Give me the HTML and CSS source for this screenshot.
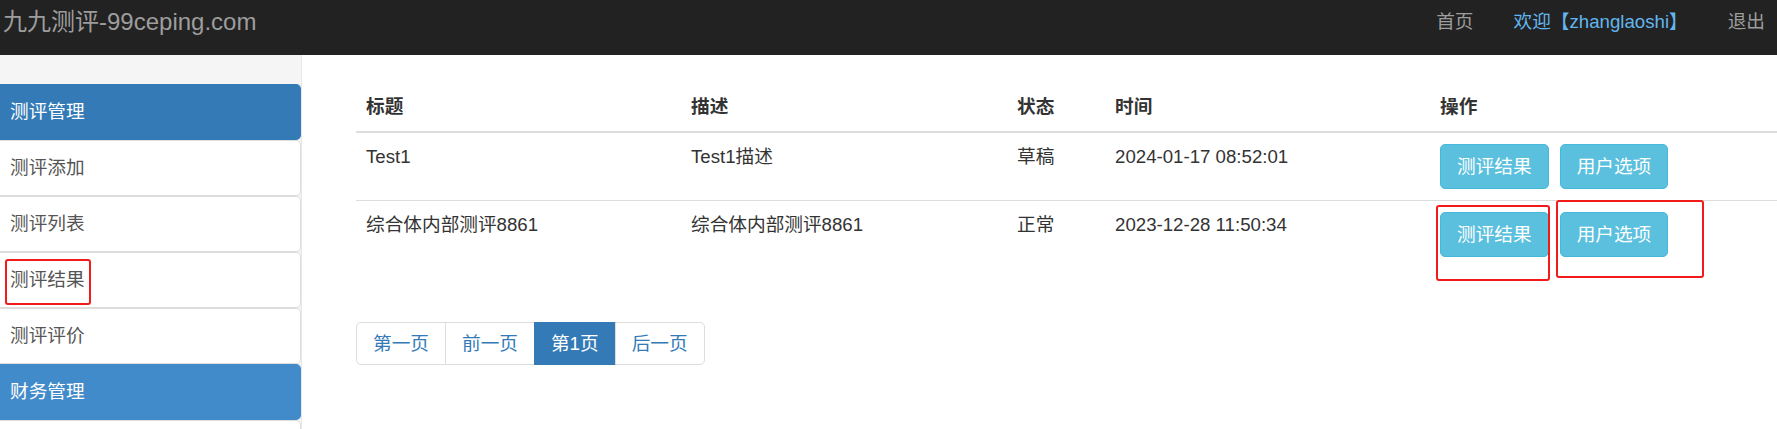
FILE: index.html
```html
<!DOCTYPE html>
<html lang="zh-CN">
<head>
  <meta charset="UTF-8" />
  <title>九九测评-99ceping.com</title>
  <link rel="stylesheet" href="styles.css">
</head>
<body>
  <nav class="navbar">
    <a class="brand" href="#">九九测评-99ceping.com</a>
    <ul class="nav-right">
      <li><a href="#">首页</a></li>
      <li><a class="welcome" href="#">欢迎【zhanglaoshi】</a></li>
      <li><a href="#">退出</a></li>
    </ul>
  </nav>

  <div class="layout">
    <div class="sidebar">
      <div class="menu-item head">测评管理</div>
      <div class="menu-item">测评添加</div>
      <div class="menu-item">测评列表</div>
      <div class="menu-item">测评结果<span class="mark mark-side"></span></div>
      <div class="menu-item">测评评价</div>
      <div class="menu-item head light">财务管理</div>
      <div class="menu-item empty"></div>
    </div>

    <div class="main">
      <table class="table">
        <thead>
          <tr>
            <th class="c-title">标题</th>
            <th class="c-desc">描述</th>
            <th class="c-state">状态</th>
            <th class="c-time">时间</th>
            <th>操作</th>
          </tr>
        </thead>
        <tbody>
          <tr>
            <td>Test1</td>
            <td>Test1描述</td>
            <td>草稿</td>
            <td>2024-01-17 08:52:01</td>
            <td>
              <div class="actions">
                <button class="btn">测评结果</button>
                <button class="btn">用户选项</button>
              </div>
            </td>
          </tr>
          <tr>
            <td>综合体内部测评8861</td>
            <td>综合体内部测评8861</td>
            <td>正常</td>
            <td>2023-12-28 11:50:34</td>
            <td class="marked">
              <div class="actions">
                <button class="btn">测评结果</button>
                <button class="btn">用户选项</button>
              </div>
              <span class="mark mark-a"></span>
              <span class="mark mark-b"></span>
            </td>
          </tr>
        </tbody>
      </table>

      <ul class="pagination">
        <li><a href="#">第一页</a></li>
        <li><a href="#">前一页</a></li>
        <li class="active"><a href="#">第1页</a></li>
        <li><a href="#">后一页</a></li>
      </ul>
    </div>
  </div>
</body>
</html>
```

FILE: styles.css
```css
body {
  margin: 0;
  font-family: "Liberation Sans", "Noto Sans CJK SC", sans-serif;
  font-size: 18.67px;
  line-height: 27px;
  color: #333;
  background: #fff;
  overflow: hidden;
}
a {
  text-decoration: none;
}
.navbar {
  height: 55px;
  background: #222;
  display: flex;
  justify-content: space-between;
  box-sizing: border-box;
  padding-top: 8px;
}
.brand {
  font-size: 24px;
  line-height: 27px;
  color: #9d9d9d;
  padding-left: 3px;
}
.nav-right {
  list-style: none;
  margin: 0;
  padding: 0;
  display: flex;
}
.nav-right a {
  display: block;
  padding: 0 20px;
  color: #9d9d9d;
}
.nav-right li:last-child a {
  padding-right: 12px;
}
.nav-right .welcome {
  color: #62b6ee;
}
.layout {
  display: flex;
  height: 374px;
}
.sidebar {
  width: 301px;
  flex-shrink: 0;
  background: #f5f5f5;
  border-right: 1px solid #e8e8e8;
  padding-top: 29px;
  overflow: hidden;
}
.menu-item {
  position: relative;
  padding: 14px 10px;
  line-height: 26px;
  background: #fff;
  color: #555;
  border: 1px solid #ddd;
  border-left: 0;
  border-radius: 0 5px 5px 0;
}
.menu-item.empty {
  height: 26px;
}
.menu-item.head {
  background: #337ab7;
  border-color: #337ab7;
  color: #fff;
}
.menu-item.head.light {
  background: #428bca;
  border-color: #428bca;
}
.main {
  flex: 1;
  padding: 28px 0 0 54px;
}
.table {
  width: 100%;
  border-collapse: collapse;
  margin-bottom: 0;
}
.table th,
.table td {
  text-align: left;
  vertical-align: top;
  padding: 11px 10px;
  line-height: 26px;
}
.table th {
  font-weight: bold;
  border-bottom: 2px solid #ddd;
}
.table td {
  border-top: 1px solid #ddd;
}
.c-title { width: 305px; }
.c-desc { width: 306px; }
.c-state { width: 78px; }
.c-time { width: 305px; }
.actions {
  display: flex;
  gap: 11px;
}
.btn {
  font-family: inherit;
  font-size: 18.67px;
  line-height: 27px;
  padding: 8px 16px;
  color: #fff;
  background: #5bc0de;
  border: 1px solid #46b8da;
  border-radius: 5px;
  cursor: pointer;
}
.marked {
  position: relative;
}
.mark {
  position: absolute;
  border: 2px solid #f21b1b;
  border-radius: 3px;
  box-sizing: border-box;
}
.mark-side {
  left: 5px;
  top: 6px;
  width: 86px;
  height: 46px;
}
.mark-a {
  left: 6px;
  top: 4px;
  width: 114px;
  height: 76px;
}
.mark-b {
  left: 126px;
  top: -1px;
  width: 148px;
  height: 78px;
}
.pagination {
  list-style: none;
  margin: 54px 0 0;
  padding: 0;
  display: flex;
}
.pagination a {
  display: block;
  padding: 7px 16px;
  line-height: 27px;
  color: #337ab7;
  border: 1px solid #ddd;
  margin-left: -1px;
}
.pagination li:first-child a {
  margin-left: 0;
  border-radius: 5px 0 0 5px;
}
.pagination li:last-child a {
  border-radius: 0 5px 5px 0;
}
.pagination .active a {
  background: #337ab7;
  border-color: #337ab7;
  color: #fff;
}
```
